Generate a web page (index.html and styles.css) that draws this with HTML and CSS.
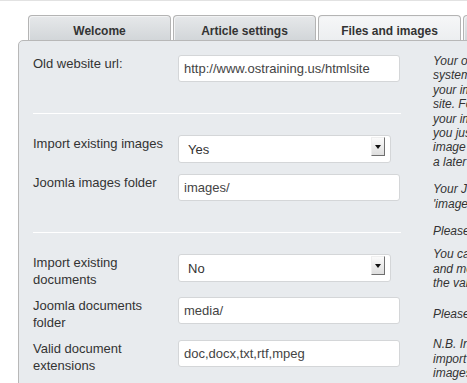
FILE: index.html
```html
<!DOCTYPE html>
<html lang="en">
<head>
  <meta charset="UTF-8">
  <meta name="viewport" content="width=device-width, initial-scale=1.0">
  <title>HTML Import - Files and images</title>
  <link rel="stylesheet" href="styles.css">
</head>
<body>

  <div class="page">
    <!-- Wizard tabs -->
    <ul class="tabs">
      <li class="tab">Welcome</li>
      <li class="tab">Article settings</li>
      <li class="tab active">Files and images</li>
      <li class="tab">Import</li>
    </ul>

    <div class="panel">
      <!-- Left: settings form -->
      <div class="form">
        <div class="section">
          <div class="row">
            <label for="oldUrl">Old website url:</label>
            <input class="field" id="oldUrl" type="text" value="http://www.ostraining.us/htmlsite">
          </div>
        </div>

        <div class="section">
          <div class="row">
            <label for="importImages">Import existing images</label>
            <div class="select-wrap">
              <select id="importImages">
                <option>Yes</option>
                <option>No</option>
              </select>
              <span class="select-btn"></span>
            </div>
          </div>
          <div class="row">
            <label for="imagesFolder">Joomla images folder</label>
            <input class="field" id="imagesFolder" type="text" value="images/">
          </div>
        </div>

        <div class="section last">
          <div class="row">
            <label for="importDocs">Import existing documents</label>
            <div class="select-wrap">
              <select id="importDocs">
                <option>No</option>
                <option>Yes</option>
              </select>
              <span class="select-btn"></span>
            </div>
          </div>
          <div class="row">
            <label for="docsFolder">Joomla documents folder</label>
            <input class="field" id="docsFolder" type="text" value="media/">
          </div>
          <div class="row">
            <label for="docExt">Valid document extensions</label>
            <input class="field" id="docExt" type="text" value="doc,docx,txt,rtf,mpeg">
          </div>
        </div>
      </div>

      <!-- Right: help text -->
      <div class="help">
        <p>Your old website url. The migration<br>
          system will use this to locate<br>
          your images and documents on that<br>
          site. For example if you choose to import<br>
          your images they will be copied, but if<br>
          you just want them linked, set the<br>
          image folder now and import them at<br>
          a later stage.</p>
        <p>Your Joomla images folder, usually<br>
          'images/'.</p>
        <p class="short">Please make sure this folder exists.</p>
        <p class="wide">You can import documents as well<br>
          and move them to your Joomla site using<br>
          the valid extensions below.</p>
        <p class="wide">Please make sure this folder exists.</p>
        <p>N.B. Inline images will be imported,<br>
          import of linked images uses the<br>
          images setting above.</p>
      </div>
    </div>
  </div>

</body>
</html>
```

FILE: styles.css
```css
* {
  margin: 0;
  padding: 0;
  box-sizing: border-box;
}

body {
  font-family: "Liberation Sans", Arial, sans-serif;
  font-size: 13px;
  color: #333;
  background-color: #fff;
  overflow: hidden;
}

.page {
  width: 760px;
  border-top: 1px solid #e2e2e2;
  padding: 14px 0 0 18px;
}

/* Tabs */
.tabs {
  list-style: none;
  display: flex;
  gap: 2px;
  margin-left: 10px;
}

.tab {
  width: 143px;
  height: 25px;
  padding-top: 5px;
  line-height: 20px;
  text-align: center;
  font-size: 12px;
  font-weight: bold;
  color: #333;
  border: 1px solid #b4b4b4;
  border-bottom: none;
  border-radius: 4px 4px 0 0;
  background: linear-gradient(#e6e8ea, #d2d6d9);
  box-shadow: inset 1px 1px 0 #f2f3f4;
}

.tab.active {
  background: linear-gradient(#f6f7f8, #eceef0);
}

/* Panel */
.panel {
  display: flex;
  width: 720px;
  min-height: 360px;
  padding: 14px 0 20px 14px;
  background-color: #e8ebee;
  border: 1px solid #b8b8b8;
  border-radius: 5px 0 0 0;
}

.form {
  width: 368px;
  flex-shrink: 0;
}

.section {
  display: flex;
  flex-direction: column;
  gap: 9px;
  padding-bottom: 28px;
  margin-bottom: 21px;
  border-bottom: 1px solid #fff;
}

.section.last {
  border-bottom: none;
  margin-bottom: 0;
}

.row {
  display: flex;
  align-items: flex-start;
  min-height: 30px;
}

.row label {
  width: 145px;
  flex-shrink: 0;
  padding-right: 10px;
  line-height: 17px;
  color: #333;
}

.field {
  width: 222px;
  height: 27px;
  padding: 0 5px;
  font-family: inherit;
  font-size: 13px;
  color: #444;
  background-color: #fff;
  border: 1px solid #d4d6d8;
  border-radius: 3px;
  outline: none;
}

/* Select with the old style arrow button */
.select-wrap {
  position: relative;
  width: 213px;
  height: 28px;
}

.select-wrap select {
  appearance: none;
  -webkit-appearance: none;
  width: 100%;
  height: 100%;
  padding-left: 9px;
  font-family: inherit;
  font-size: 13px;
  color: #333;
  background-color: #fff;
  border: 1px solid #d4d6d8;
  border-radius: 3px;
  outline: none;
}

.select-btn {
  position: absolute;
  right: 6px;
  top: 2px;
  width: 14px;
  height: 19px;
  background: linear-gradient(#fbfbfb, #dedede);
  border-top: 1px solid #efefef;
  border-left: 1px solid #efefef;
  border-right: 1px solid #6f6f6f;
  border-bottom: 1px solid #6f6f6f;
  pointer-events: none;
}

.select-btn::after {
  content: "";
  position: absolute;
  left: 3px;
  top: 7px;
  border-left: 3px solid transparent;
  border-right: 3px solid transparent;
  border-top: 4px solid #111;
}

/* Help column */
.help {
  margin-left: 32px;
  margin-top: -1px;
  white-space: nowrap;
  font-size: 12px;
  font-style: italic;
  line-height: 14.4px;
  color: #333;
}

.help p {
  margin-bottom: 13px;
}

.help p.short {
  margin-bottom: 9px;
}

.help p.wide {
  margin-bottom: 16px;
}
```
